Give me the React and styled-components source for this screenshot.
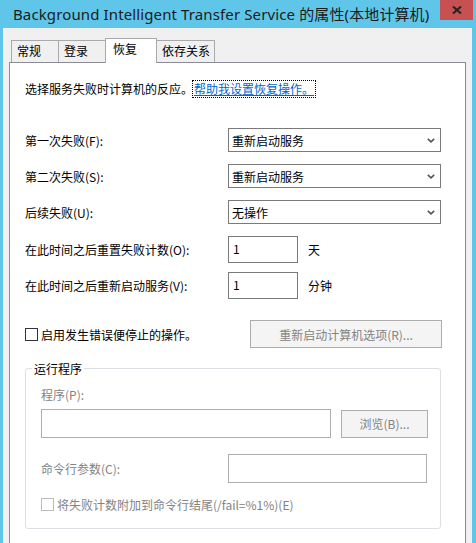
import React from "react";
import styled, { createGlobalStyle } from "styled-components";

const GlobalStyle = createGlobalStyle`
  html, body {
    margin: 0;
    padding: 0;
  }
  body {
    background: #5fc6ea;
    font-family: "Noto Sans CJK SC", "Noto Sans", sans-serif;
    font-size: 12px;
    color: #000;
  }
  * {
    box-sizing: border-box;
  }
`;

const Window = styled.div`
  width: 476px;
  height: 543px;
  overflow: hidden;
  display: flex;
  flex-direction: column;
  background: #5fc6ea;
`;

const TitleBar = styled.div`
  height: 28px;
  flex-shrink: 0;
  display: flex;
  align-items: flex-start;
`;

const Title = styled.div`
  padding: 4px 0 0 13px;
  font-family: "Noto Sans", "Noto Sans CJK SC", sans-serif;
  font-size: 15px;
  letter-spacing: 0.12px;
  line-height: 20px;
  color: #1b1b1b;
  white-space: nowrap;
`;

const CloseButton = styled.div`
  margin-left: auto;
  margin-right: 3px;
  width: 33px;
  height: 20px;
  background: #c75050;
  display: flex;
  align-items: center;
  justify-content: center;
`;

const Client = styled.div`
  flex: 1;
  margin: 0 4px 0 3px;
  background: #f0f0f0;
  padding: 10px 0 0 6px;
  display: flex;
  flex-direction: column;
`;

const TabStrip = styled.div`
  display: flex;
  align-items: flex-start;
  height: 25px;
  margin: 0 0 -1px 2px;
  position: relative;
  z-index: 1;
`;

const Tab = styled.div`
  width: ${(p) => p.$w}px;
  height: ${(p) => (p.$active ? 25 : 22)}px;
  margin-top: ${(p) => (p.$active ? 0 : 2)}px;
  margin-right: -1px;
  padding-left: ${(p) => (p.$active ? 7 : 5)}px;
  border: 1px solid #a7a9ad;
  border-bottom: none;
  background: ${(p) => (p.$active ? "#fff" : "#f0f0f0")};
  position: relative;
  z-index: ${(p) => (p.$active ? 2 : 1)};
  line-height: 20px;
  white-space: nowrap;
`;

const Panel = styled.div`
  flex: 1;
  width: 457px;
  background: #fff;
  border: 1px solid #898c95;
  border-bottom: none;
  padding: 17px 23px 0 15px;
`;

const Intro = styled.div`
  display: flex;
  align-items: center;
  line-height: 17px;
  height: 17px;
`;

const HelpLink = styled.a`
  margin-left: 0;
  padding: 0 1px;
  color: #0066cc;
  text-decoration: underline;
  outline: 1px dotted #000;
  outline-offset: 0;
  line-height: 16px;
`;

const FieldRow = styled.div`
  display: flex;
  align-items: center;
  margin-top: ${(p) => p.$top}px;
`;

const Label = styled.div`
  width: ${(p) => p.$w || 203}px;
  flex-shrink: 0;
  line-height: 17px;
  color: ${(p) => (p.$disabled ? "#838383" : "#000")};
  white-space: nowrap;
`;

const Combo = styled.div`
  width: 213px;
  height: 24px;
  border: 1px solid #7a7a7a;
  background: #fff;
  display: flex;
  align-items: center;
  justify-content: space-between;
  padding: 0 5px 0 3px;
  line-height: 17px;
`;

const NumberBox = styled.div`
  width: 70px;
  height: 27px;
  border: 1px solid #7a7a7a;
  padding: 3px 0 0 4px;
  line-height: 17px;
`;

const Unit = styled.div`
  margin-left: 10px;
  line-height: 17px;
`;

const ActionRow = styled.div`
  display: flex;
  align-items: center;
  justify-content: space-between;
  margin-top: 21px;
`;

const CheckLabel = styled.label`
  display: flex;
  align-items: center;
  gap: 3px;
  line-height: 17px;
  color: ${(p) => (p.$disabled ? "#838383" : "#000")};
  white-space: nowrap;
`;

const Box = styled.span`
  width: 13px;
  height: 13px;
  border: 1px solid ${(p) => (p.$disabled ? "#bcbcbc" : "#333")};
  background: #fff;
  flex-shrink: 0;
`;

const DisabledButton = styled.div`
  width: ${(p) => p.$w}px;
  height: ${(p) => p.$h}px;
  border: 1px solid #adadad;
  background: #f4f4f4;
  color: #838383;
  display: flex;
  align-items: center;
  justify-content: center;
  line-height: 17px;
  flex-shrink: 0;
`;

const Group = styled.fieldset`
  margin: 12px 0 0 0;
  width: 416px;
  border: 1px solid #dcdfe3;
  border-radius: 3px;
  padding: 0 15px 15px 15px;
  min-width: 0;
`;

const Legend = styled.legend`
  margin-left: -9px;
  padding: 0 2px;
  line-height: 17px;
`;

const GroupLine = styled.div`
  display: flex;
  align-items: center;
  gap: ${(p) => p.$gap || 0}px;
  margin-top: ${(p) => p.$top}px;
`;

const TextBox = styled.div`
  width: ${(p) => p.$w}px;
  height: 29px;
  border: 1px solid #adadad;
  background: #fff;
  flex-shrink: 0;
`;

const Chevron = () => (
  <svg width="8" height="5" viewBox="0 0 8 5">
    <path d="M0.8 0.8 L4 3.8 L7.2 0.8" fill="none" stroke="#555" strokeWidth="1.6" />
  </svg>
);

const CloseGlyph = () => (
  <svg width="10" height="8" viewBox="0 0 10 8">
    <path d="M1 0.5 L9 7.5 M9 0.5 L1 7.5" stroke="#222" strokeWidth="2" />
  </svg>
);

const tabs = [
  { name: "常规", w: 48 },
  { name: "登录", w: 48 },
  { name: "恢复", w: 52, active: true },
  { name: "依存关系", w: 59 },
];

const combos = [
  { label: "第一次失败(F):", value: "重新启动服务", top: 31 },
  { label: "第二次失败(S):", value: "重新启动服务", top: 12 },
  { label: "后续失败(U):", value: "无操作", top: 12 },
];

export default function App() {
  return (
    <Window>
      <GlobalStyle />
      <TitleBar>
        <Title>Background Intelligent Transfer Service 的属性(本地计算机)</Title>
        <CloseButton>
          <CloseGlyph />
        </CloseButton>
      </TitleBar>
      <Client>
        <TabStrip>
          {tabs.map((t) => (
            <Tab key={t.name} $w={t.w} $active={t.active}>
              {t.name}
            </Tab>
          ))}
        </TabStrip>
        <Panel>
          <Intro>
            选择服务失败时计算机的反应。
            <HelpLink>帮助我设置恢复操作。</HelpLink>
          </Intro>

          {combos.map((c) => (
            <FieldRow key={c.label} $top={c.top}>
              <Label>{c.label}</Label>
              <Combo>
                <span>{c.value}</span>
                <Chevron />
              </Combo>
            </FieldRow>
          ))}

          <FieldRow $top={12}>
            <Label>在此时间之后重置失败计数(O):</Label>
            <NumberBox>1</NumberBox>
            <Unit>天</Unit>
          </FieldRow>
          <FieldRow $top={9}>
            <Label>在此时间之后重新启动服务(V):</Label>
            <NumberBox>1</NumberBox>
            <Unit>分钟</Unit>
          </FieldRow>

          <ActionRow>
            <CheckLabel>
              <Box />
              启用发生错误便停止的操作。
            </CheckLabel>
            <DisabledButton $w={192} $h={28}>
              重新启动计算机选项(R)...
            </DisabledButton>
          </ActionRow>

          <Group>
            <Legend>运行程序</Legend>
            <GroupLine $top={9}>
              <Label $disabled>程序(P):</Label>
            </GroupLine>
            <GroupLine $top={6} $gap={10}>
              <TextBox $w={290} />
              <DisabledButton $w={87} $h={28}>
                浏览(B)...
              </DisabledButton>
            </GroupLine>
            <GroupLine $top={16}>
              <Label $disabled $w={187}>
                命令行参数(C):
              </Label>
              <TextBox $w={199} />
            </GroupLine>
            <GroupLine $top={13}>
              <CheckLabel $disabled>
                <Box $disabled />
                将失败计数附加到命令行结尾(/fail=%1%)(E)
              </CheckLabel>
            </GroupLine>
          </Group>
        </Panel>
      </Client>
    </Window>
  );
}
